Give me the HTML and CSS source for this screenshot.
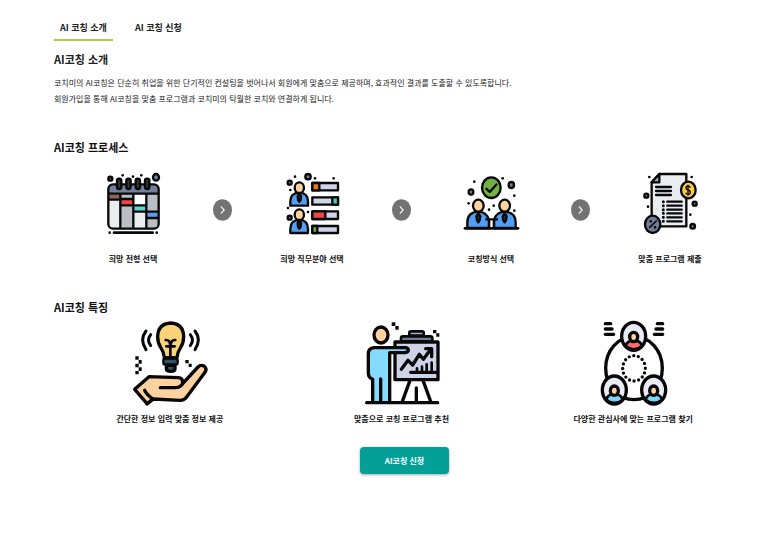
FILE: index.html
```html
<!DOCTYPE html>
<html lang="ko">
<head>
<meta charset="utf-8">
<title>AI 코칭 소개</title>
<link rel="stylesheet" href="styles.css">
</head>
<body>
<main class="page">
  <nav class="tabs">
    <a class="tab tab-active" href="#intro">AI 코칭 소개</a>
    <a class="tab" href="#apply">AI 코칭 신청</a>
  </nav>

  <section class="intro" id="intro">
    <h1 class="title">AI코칭 소개</h1>
    <p class="text">코치미의 AI코칭은 단순히 취업을 위한 단기적인 컨설팅을 벗어나서 회원에게 맞춤으로 제공하며, 효과적인 결과를 도출할 수 있도록합니다.<br>회원가입을 통해 AI코칭을 맞춤 프로그램과 코치미의 탁월한 코치와 연결하게 됩니다.</p>
  </section>

  <section class="process">
    <h2 class="title">AI코칭 프로세스</h2>
    <ol class="steps">
      <li class="step">
        <svg class="step-icon" viewBox="24 36 180 198" aria-hidden="true">
          <rect x="40" y="73" width="151" height="133" rx="14" fill="#e9edef"/>
          <path d="M40 101V87q0-14 14-14h123q14 0 14 14v14z" fill="#73809f"/>
          <path d="M77 101h38v105H77zM154 101h37v91q0 14-14 14h-23z" fill="#b9bfc4"/>
          <path d="M118 103h35v29h-35z" fill="#fff"/>
          <path d="M41 103h33v16H41z" fill="#98625b"/>
          <path d="M78 119h35v16H78z" fill="#ef4444"/>
          <path d="M117 138h35v17h-35z" fill="#5bd5cd"/>
          <path d="M156 157h34v17h-34z" fill="#529ff5"/>
          <g fill="none" stroke="#080808" stroke-width="7">
            <rect x="40" y="73" width="151" height="133" rx="14"/>
            <path d="M40 101h151M76 101v105M115 101v105M154 101v105M40 119h36M76 117h39M76 136h39M115 136h39M115 155h39M154 155h37M154 174h37"/>
            <path d="M57 218h116" stroke-width="8" stroke-linecap="round"/>
          </g>
          <g fill="#333638" stroke="#080808" stroke-width="7"><rect x="66" y="56" width="13" height="31" rx="6"/><rect x="94" y="56" width="13" height="31" rx="6"/><rect x="122" y="56" width="13" height="31" rx="6"/><rect x="150" y="56" width="13" height="31" rx="6"/></g>
          <circle cx="46" cy="56" r="6" fill="#444b5e" stroke="#080808" stroke-width="7"/>
          <ellipse cx="183" cy="52" rx="9" ry="10" fill="#73809f" stroke="#080808" stroke-width="7"/>
          <g fill="#080808"><circle cx="83" cy="46" r="4"/><circle cx="114" cy="50" r="4"/><circle cx="139" cy="46" r="4"/><circle cx="44" cy="218" r="4"/><circle cx="185" cy="218" r="4"/></g>
        </svg>
        <span class="label">희망 전형 선택</span>
      </li>
      <li class="arrow" aria-hidden="true"><svg class="arrow-icon" viewBox="0 0 58 66"><ellipse cx="29" cy="33" rx="29" ry="33" fill="#737373"/><path d="M24 22l10 11-10 11" fill="none" stroke="#eee" stroke-width="4"/></svg></li>
      <li class="step">
        <svg class="step-icon" viewBox="36 36 180 198" aria-hidden="true">
          <g stroke="#080808" stroke-width="7" stroke-linejoin="round">
            <path d="M61 137v-13q0-25 27-27 26 2 26 27v13z" fill="#529ff5"/>
            <path d="M61 219v-13q0-25 27-27 26 2 26 27v13z" fill="#529ff5"/>
            <ellipse cx="88" cy="83" rx="14" ry="16" fill="#ffd2a0"/>
            <ellipse cx="88" cy="164" rx="14" ry="16" fill="#ffd2a0"/>
            <path d="M88 100l-5 8 1 12 4 5 4-5 1-12zM88 181l-5 8 1 12 4 5 4-5 1-12z" fill="#252c3b"/>
            <path d="M127 69h77v22h-77zM127 112h77v22h-77zM127 154h77v23h-77zM127 198h77v21h-77z" fill="#ced5e7"/>
            <path d="M127 69h21v22h-21z" fill="#ea7417"/>
            <path d="M187 112h17v22h-17z" fill="#46cec5"/>
            <path d="M127 154h39v23h-39z" fill="#f04444"/>
            <path d="M127 198h15v21h-15z" fill="#72aa43"/>
            <circle cx="59" cy="68" r="6" fill="#73809f"/><circle cx="114" cy="50" r="8" fill="#73809f"/><circle cx="59" cy="173" r="6" fill="#73809f"/>
          </g>
          <g fill="#080808"><circle cx="75" cy="50" r="4"/><circle cx="135" cy="55" r="4"/><circle cx="191" cy="55" r="4"/><circle cx="61" cy="90" r="4"/><circle cx="54" cy="144" r="4"/><circle cx="114" cy="156" r="4"/></g>
        </svg>
        <span class="label">희망 직무분야 선택</span>
      </li>
      <li class="arrow" aria-hidden="true"><svg class="arrow-icon" viewBox="0 0 58 66"><ellipse cx="29" cy="33" rx="29" ry="33" fill="#737373"/><path d="M24 22l10 11-10 11" fill="none" stroke="#eee" stroke-width="4"/></svg></li>
      <li class="step">
        <svg class="step-icon" viewBox="33 36 180 198" aria-hidden="true">
          <g stroke="#080808" stroke-width="7" stroke-linejoin="round">
            <ellipse cx="124" cy="83" rx="28" ry="31" fill="#73b044"/>
            <path d="M110 87l9 9 20-22" fill="none" stroke-width="7" stroke-linecap="square"/>
            <path d="M52 204v-17q0-30 33-32 25 1 32 25v24z" fill="#529ff5"/>
            <path d="M197 204v-17q0-30-33-32-25 1-32 25v24z" fill="#529ff5"/>
            <path d="M106 178h38M132 178v26M117 178v26" fill="none"/>
            <path d="M85 159l-6 10 2 12 4 6 4-6 2-12zM164 159l-6 10 2 12 4 6 4-6 2-12z" fill="#252c3b"/>
            <ellipse cx="85" cy="137" rx="16" ry="18" fill="#ffd2a0"/>
            <ellipse cx="164" cy="137" rx="16" ry="18" fill="#ffd2a0"/>
            <path d="M45 205h159" stroke-linecap="round" stroke-width="8"/>
            <ellipse cx="63" cy="96" rx="7" ry="8" fill="#73809f"/><ellipse cx="184" cy="75" rx="8" ry="9" fill="#73809f"/>
          </g>
          <g fill="#080808"><circle cx="73" cy="65" r="4"/><circle cx="158" cy="55" r="4"/><circle cx="193" cy="107" r="4"/><circle cx="56" cy="130" r="4"/><circle cx="131" cy="137" r="4"/><circle cx="117" cy="149" r="4"/><circle cx="193" cy="152" r="4"/></g>
        </svg>
        <span class="label">코칭방식 선택</span>
      </li>
      <li class="arrow" aria-hidden="true"><svg class="arrow-icon" viewBox="0 0 58 66"><ellipse cx="29" cy="33" rx="29" ry="33" fill="#737373"/><path d="M24 22l10 11-10 11" fill="none" stroke="#eee" stroke-width="4"/></svg></li>
      <li class="step">
        <svg class="step-icon" viewBox="45 36 180 198" aria-hidden="true">
          <g stroke="#080808" stroke-width="7" stroke-linejoin="round">
            <path d="M80 67l23-25h81v157H80z" fill="#e9edef"/>
            <path d="M80 67h23V42z" fill="#a9b0bb"/>
            <path d="M93 81h45M93 93h45M93 105h45M127 125h43M127 137h43M127 149h43M127 160h43M127 172h43M127 184h43" fill="none" stroke-linecap="round"/>
            <path d="M115 125v.1M115 137v.1M115 149v.1M115 160v.1M115 172v.1M115 184v.1" stroke-width="9" stroke-linecap="round"/>
            <ellipse cx="190" cy="90" rx="22" ry="25" fill="#ffcc43"/>
            <path d="M196 83q-2-5-7-5-6 0-6 6 0 5 6 6 7 1 7 7 0 6-7 6-5 0-7-5M189 74v33" fill="none" stroke-width="4"/>
            <ellipse cx="83" cy="193" rx="23" ry="26" fill="#707c98"/>
            <path d="M74 202l20-19" stroke-width="5" stroke-linecap="round"/>
            <circle cx="77" cy="184" r="2" stroke-width="4"/><circle cx="90" cy="202" r="2" stroke-width="4"/>
            <circle cx="64" cy="107" r="6" fill="#73809f"/><circle cx="209" cy="131" r="6" fill="#73809f"/><circle cx="203" cy="199" r="7" fill="#73809f"/>
          </g>
          <g fill="#080808"><circle cx="73" cy="51" r="4"/><circle cx="200" cy="51" r="4"/><circle cx="69" cy="140" r="4"/><circle cx="196" cy="164" r="4"/></g>
        </svg>
        <span class="label">맞춤 프로그램 제출</span>
      </li>
    </ol>
  </section>

  <section class="features">
    <h2 class="title">AI코칭 특징</h2>
    <ul class="feature-list">
      <li class="feature">
        <svg class="feature-icon" viewBox="264 87 252 264" aria-hidden="true">
          <g stroke="#080808" stroke-width="10" stroke-linejoin="round" stroke-linecap="round">
            <path d="M373 203q-2-18-11-31-9-14-9-32 1-39 39-41 38 2 39 41 0 18-9 32-9 13-11 31z" fill="#fad37a"/>
            <path d="M377 150q14-1 14 18v31M406 150q-14-1-14 18M379 169h25" fill="none" stroke-width="8"/>
            <path d="M379 226h26v10q0 8-13 8t-13-8z" fill="#315268"/>
            <rect x="370" y="206" width="43" height="17" rx="5" fill="#315268" stroke-width="7"/>
            <path d="M318 123q-20 25 0 56M332 134q-13 17 0 33M465 123q20 25 0 56M451 134q13 17 0 33" fill="none" stroke-width="9"/>
            <path d="M284 298l43-38 88 3q13 1 13 14v4l46-50q8-8 18-3 10 8 3 19l-55 74q-8 11-21 10l-79-4-19 14z" fill="#ffd2a0"/>
            <path d="M361 293h44q23-1 23-17M314 301q5 12 25 26l-18 15" fill="none"/>
          </g>
          <path d="M286 199h10v10h-10zM296 210h9v11h-9zM286 221h10v11h-10zM296 232h9v11h-9zM286 243h10v10h-10zM436 210h10v10h-10zM446 221h9v10h-9z" fill="#080808"/>
        </svg>
        <span class="label">간단한 정보 입력 맞춤 정보 제공</span>
      </li>
      <li class="feature">
        <svg class="feature-icon" viewBox="59 27 252 264" aria-hidden="true">
          <g stroke="#080808" stroke-width="10" stroke-linejoin="round" stroke-linecap="round">
            <path d="M209 211l-24 66M248 211l24 66M228 234v43" fill="none"/>
            <path d="M164 96h129v113H164z" fill="#ced3e8"/>
            <path d="M182 94V84q0-5 6-5h82q6 0 6 5v10z" fill="#737c9b" stroke-width="8"/>
            <path d="M207 77V68q0-4 5-4h33q5 0 5 4v9z" fill="#a6adc9" stroke-width="8"/>
            <path d="M183 178l20-27 14 14 20-32 12 15 23-31M256 116h18v24M211 187h80" fill="none"/>
            <path d="M230 184v-9M245 184v-14M259 184v-21M274 184v-26" fill="none" stroke-width="8"/>
            <path d="M97 277v-69q-13-5-13-19v-58q0-16 17-18h96q7 2 7 8-1 7-11 7h-45v149" fill="#83dcff"/>
            <path d="M121 207v69M79 278h213" fill="none"/>
            <ellipse cx="122" cy="75" rx="21" ry="24" fill="#ffd2a0"/>
          </g>
          <path d="M154 37h11v11h-11zM165 48h10v11h-10zM278 60h10v10h-10zM288 70h9v10h-9z" fill="#080808"/>
        </svg>
        <span class="label">맞춤으로 코칭 프로그램 추천</span>
      </li>
      <li class="feature">
        <svg class="feature-icon" viewBox="78 27 252 264" aria-hidden="true">
          <g stroke="#080808" stroke-width="10" stroke-linecap="round">
            <ellipse cx="207" cy="174" rx="85" ry="95" fill="none"/>
            <ellipse cx="207" cy="175" rx="34" ry="38" fill="none" stroke-dasharray="0 14"/>
            <ellipse cx="206" cy="79" rx="36" ry="42" fill="#e9edf3"/>
            <path d="M182 108q3-16 24-17 21 1 25 17-24 20-49 0z" fill="#ff6b73" stroke-width="8"/>
            <ellipse cx="206" cy="81" rx="12" ry="14" fill="#ffd2a0"/>
            <ellipse cx="148" cy="240" rx="36" ry="42" fill="#e9edf3"/>
            <path d="M124 269q3-16 24-17 21 1 25 17-24 20-49 0z" fill="#79d8fa" stroke-width="8"/>
            <ellipse cx="148" cy="242" rx="12" ry="14" fill="#ffd2a0"/>
            <ellipse cx="266" cy="240" rx="36" ry="42" fill="#e9edf3"/>
            <path d="M242 269q3-16 24-17 21 1 25 17-24 20-49 0z" fill="#79d8fa" stroke-width="8"/>
            <ellipse cx="266" cy="242" rx="12" ry="14" fill="#ffd2a0"/>
            <path d="M121 41h16M121 57h20M121 73h25M277 41h16M273 57h20M268 73h25"/>
          </g>
        </svg>
        <span class="label">다양한 관심사에 맞는 프로그램 찾기</span>
      </li>
    </ul>
  </section>

  <div class="actions" id="apply">
    <button class="apply" type="button">AI코칭 신청</button>
  </div>
</main>
</body>
</html>
```
FILE: styles.css
```css
* {
  box-sizing: border-box;
}

body {
  margin: 0;
  background: #fff;
  color: #222;
  font-family: "Noto Sans CJK KR", sans-serif;
}

ol,
ul,
p,
h1,
h2 {
  margin: 0;
  padding: 0;
  list-style: none;
}

svg {
  display: block;
}

.page {
  padding: 17px 11px 32px 54px;
}

.tabs {
  display: flex;
  gap: 16px;
}

.tab {
  padding: 0 6px;
  border-bottom: 2px solid transparent;
  color: #222;
  font-size: 9px;
  font-weight: 700;
  line-height: 22px;
  text-decoration: none;
}

.tab-active {
  border-bottom-color: #a3cf46;
}

.title {
  font-size: 11px;
  font-weight: 700;
  line-height: 20px;
}

.intro {
  margin-top: 8px;
}

.text {
  margin-top: 6px;
  font-size: 8px;
  line-height: 16px;
}

.process {
  margin-top: 30px;
}

.process .title,
.features .title {
  color: #111;
}

.steps {
  display: flex;
  margin-top: 15px;
}

.step,
.feature {
  display: flex;
  flex: 1;
  flex-direction: column;
  align-items: center;
}

.step-icon {
  width: 60px;
  height: 66px;
}

.step .label {
  margin-top: 12px;
}

.label {
  color: #111;
  font-size: 8px;
  font-weight: 700;
  line-height: 18px;
}

.arrow {
  padding: 27px 1px 0;
}

.arrow-icon {
  width: 19px;
  height: 22px;
}

.features {
  margin-top: 29px;
}

.feature-list {
  display: flex;
  margin-top: 2px;
}

.feature-icon {
  width: 84px;
  height: 88px;
}

.feature .label {
  margin-top: 3px;
}

.actions {
  display: flex;
  justify-content: center;
  margin-top: 19px;
  padding-left: 6px;
}

.apply {
  padding: 4px 25px;
  border: 0;
  border-radius: 4px;
  background: #049f96;
  box-shadow: 0 1px 3px rgb(0 0 0 / 35%);
  color: #fff;
  font-family: inherit;
  font-size: 8px;
  font-weight: 700;
  line-height: 19px;
}
```
